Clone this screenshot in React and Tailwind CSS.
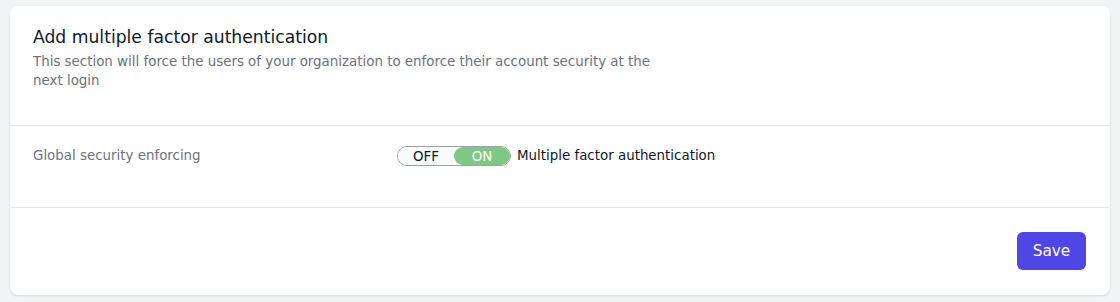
export default function App() {
  return (
    <div className="min-h-[302px] bg-gray-100 px-2.5 pt-1.5 pb-[7px]" style={{ fontFamily: '"DejaVu Sans", sans-serif' }}>
      <div className="rounded-lg bg-white shadow">
        <div className="border-b border-gray-200 pl-[23px] pr-6 pt-[17px] pb-[35px]">
          <h2 className="text-[17.2px] leading-7 text-gray-900">Add multiple factor authentication</h2>
          <p className="mt-px max-w-[630px] text-[13.4px] leading-[19px] text-gray-500">
            This section will force the users of your organization to enforce their account security at the next login
          </p>
        </div>
        <div className="flex h-[82px] items-start border-b border-gray-200 pl-[23px] pr-6 pt-[20px]">
          <div className="w-[364px] text-[13.4px] leading-5 text-gray-500">Global security enforcing</div>
          <div className="flex items-center">
            <div className="flex h-[20px] overflow-hidden rounded-full border border-gray-400 text-[13.4px]">
              <span className="flex w-[56px] items-center justify-center bg-gray-50 pt-0.5 text-gray-900">OFF</span>
              <span className="flex w-[56px] items-center justify-center rounded-full bg-[#7fc882] pt-0.5 text-white">ON</span>
            </div>
            <span className="ml-1.5 text-[13.4px] leading-5 text-gray-900">Multiple factor authentication</span>
          </div>
        </div>
        <div className="flex justify-end px-6 pt-6 pb-[25px]">
          <button className="h-[38px] w-[69px] rounded-md bg-[#4f46e5] text-[15.3px] text-white">Save</button>
        </div>
      </div>
    </div>
  );
}
